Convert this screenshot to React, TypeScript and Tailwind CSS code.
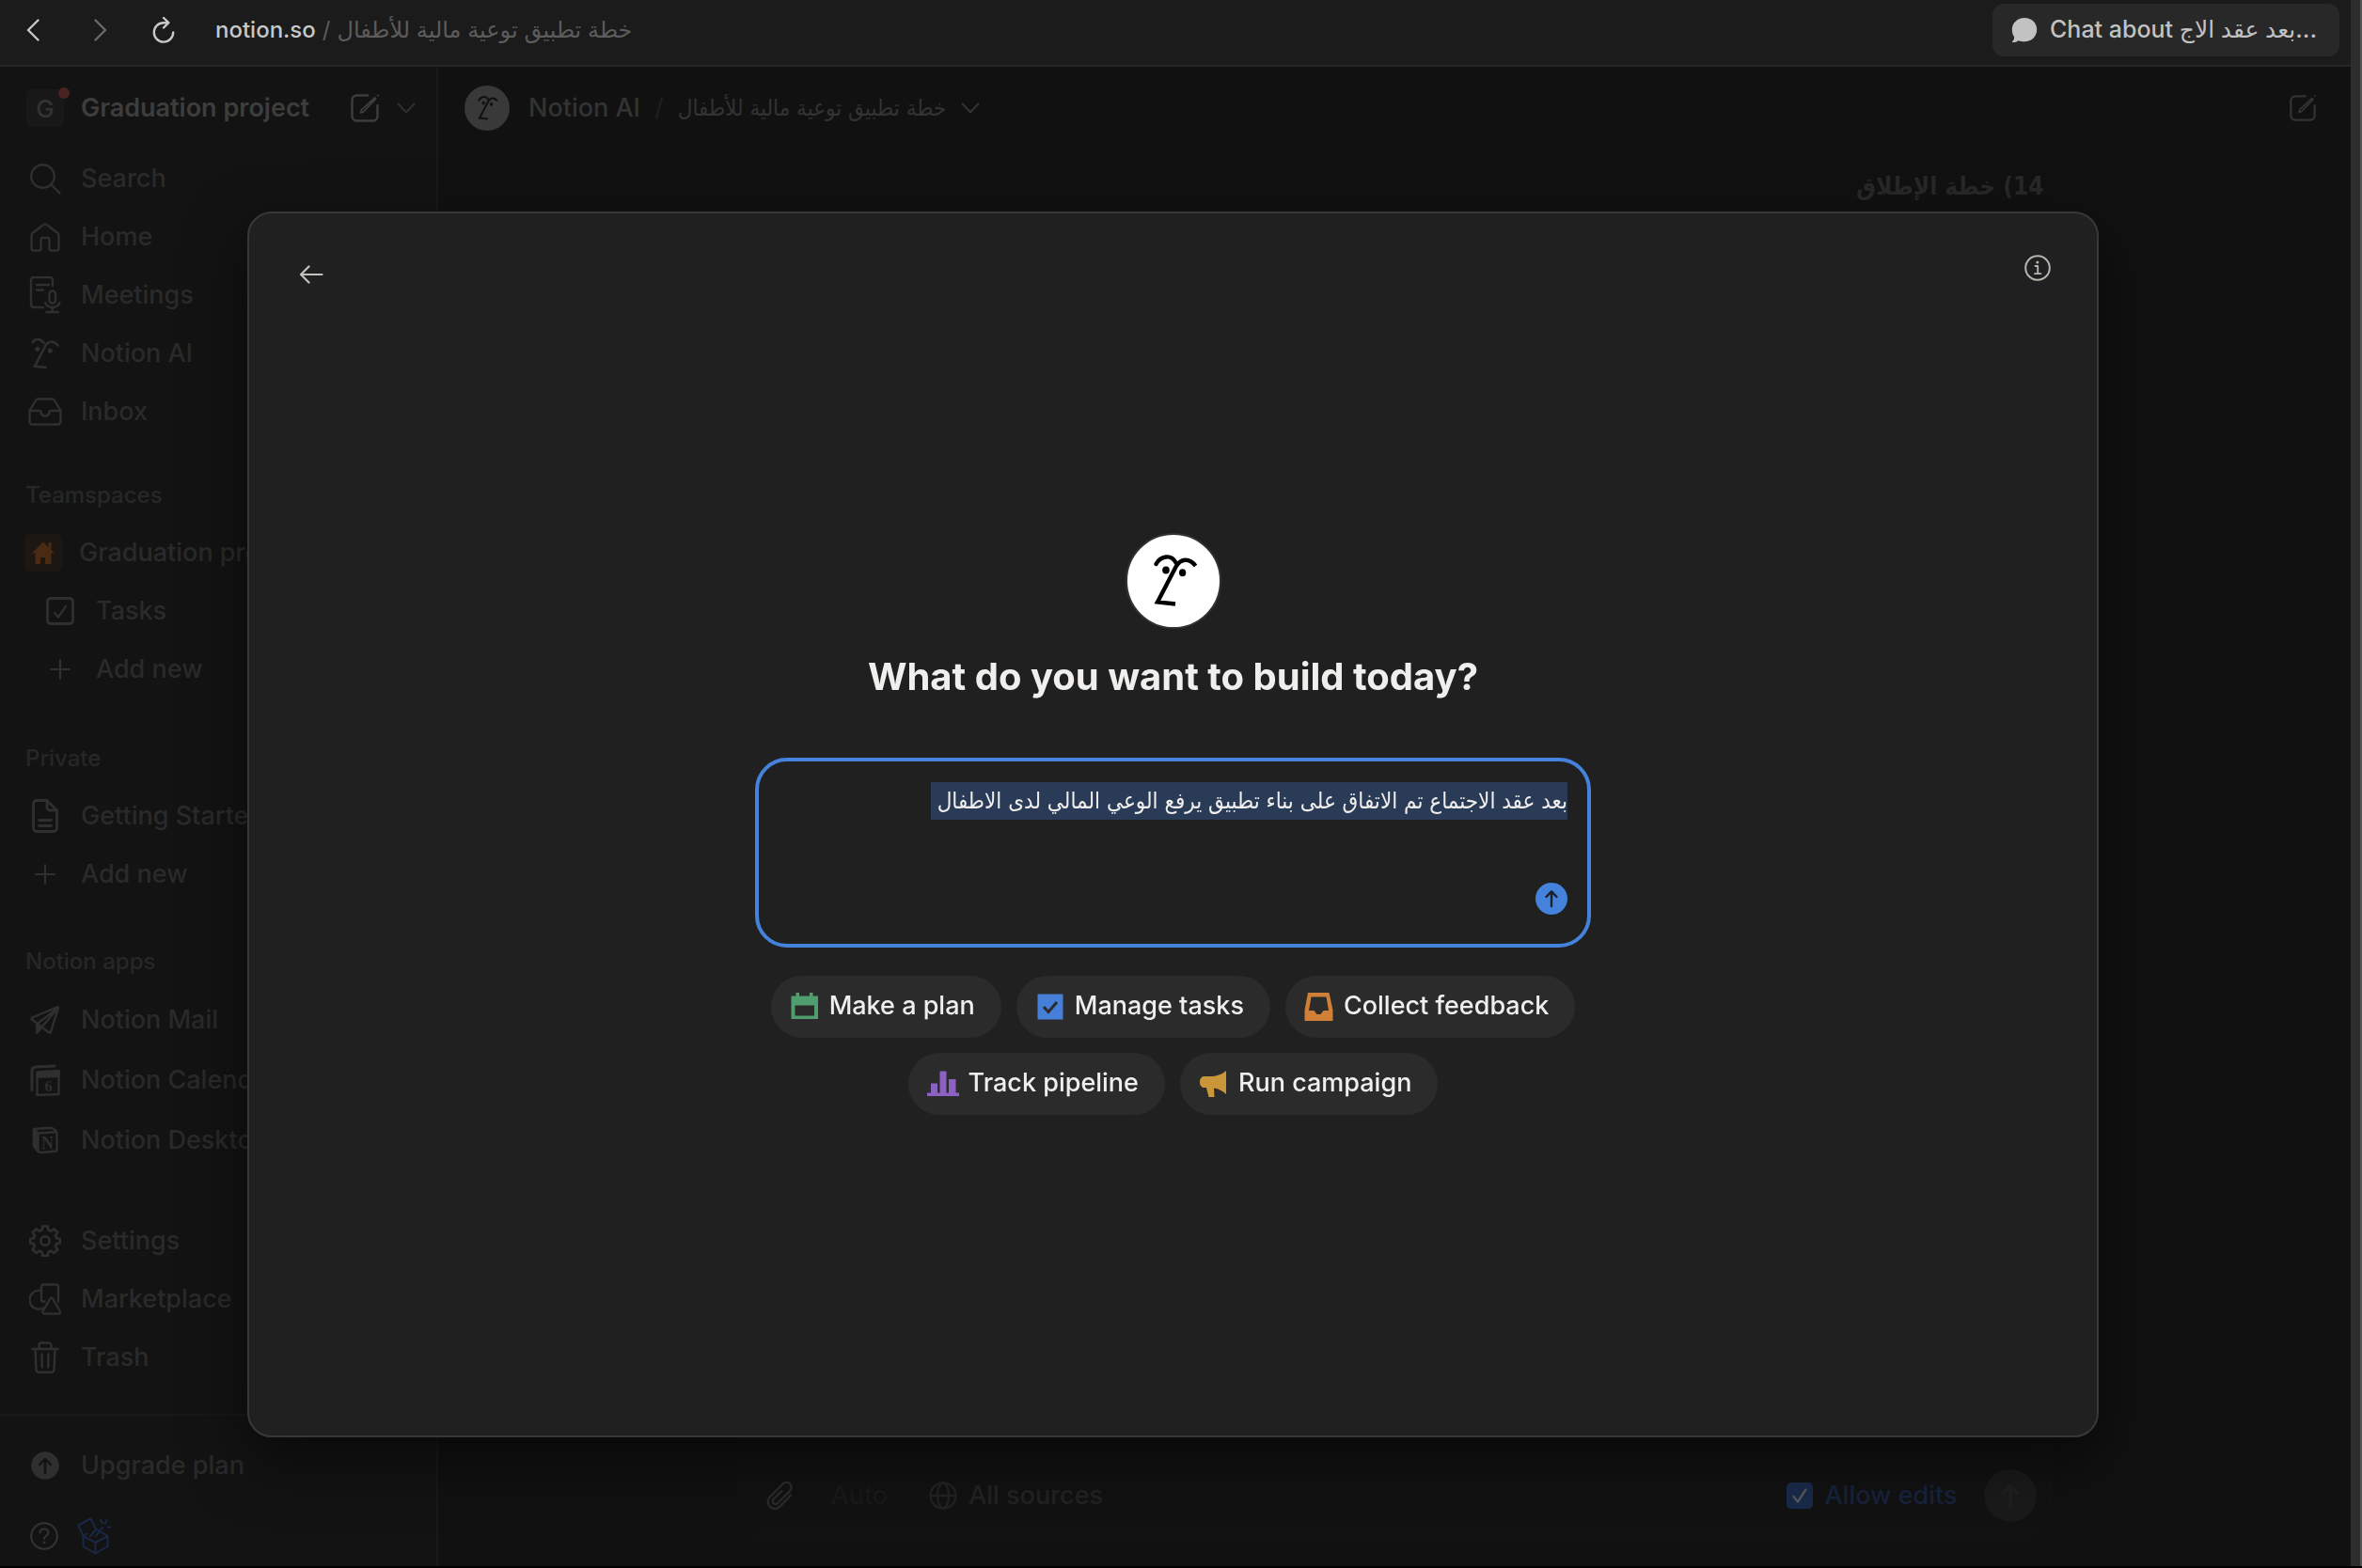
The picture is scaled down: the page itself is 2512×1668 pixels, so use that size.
import React, { useEffect, useRef } from 'react';

type IconProps = { className?: string };

const stroke = {
  fill: 'none',
  stroke: 'currentColor',
  strokeWidth: 2.4,
  strokeLinecap: 'round' as const,
  strokeLinejoin: 'round' as const,
};

const FaceIcon = ({ className = 'size-[98px]' }: IconProps) => (
  <svg viewBox="0 0 98 98" className={className} fill="none" stroke="currentColor" strokeWidth={4.4} aria-hidden="true">
    <path d="M30.5 31C35 22.500 46.500 20 51.500 29.500" strokeLinecap="round" />
    <path d="M51 73.5 32 71.5 51.500 34C57 24.500 66 24.500 72.500 33" />
    <ellipse cx="41" cy="37.5" rx="3.8" ry="4" fill="currentColor" stroke="none" />
    <ellipse cx="58.6" cy="40.3" rx="3.6" ry="4" fill="currentColor" stroke="none" />
  </svg>
);

const SmallFaceIcon = () => (
  <svg viewBox="26 20 50 58" className="h-[34px] w-[30px]" fill="none" stroke="currentColor" strokeWidth={4.6} aria-hidden="true">
    <path d="M28.5 28.5C33 21.5 43 21.5 48.5 30" strokeLinecap="round" />
    <path d="M52 74.5 32 72.5 51.5 35C56 26 67.5 25 74 34.5" strokeLinecap="round" strokeLinejoin="round" />
    <circle cx="37" cy="41" r="4.4" fill="currentColor" stroke="none" />
    <circle cx="60" cy="44" r="4.4" fill="currentColor" stroke="none" />
  </svg>
);

const SearchIcon = () => (
  <svg viewBox="0 0 34 34" className="size-[34px]" {...stroke} aria-hidden="true">
    <circle cx="14.5" cy="14.5" r="12.3" />
    <path d="m23.5 23.5 9 9" />
  </svg>
);

const HomeIcon = () => (
  <svg viewBox="0 0 32 32" className="size-8" {...stroke} aria-hidden="true">
    <path d="M1.5 14.2a3 3 0 0 1 1.300-2.500L14.300 3a3 3 0 0 1 3.400 0l11.500 8.700a3 3 0 0 1 1.300 2.500V28a2.500 2.500 0 0 1-2.500 2.500h-5A2 2 0 0 1 20.500 28.500V19a2 2 0 0 0-2-2h-5a2 2 0 0 0-2 2v9.500a2 2 0 0 1-2 2H4A2.500 2.500 0 0 1 1.500 28z" />
  </svg>
);

const MeetingsIcon = () => (
  <svg viewBox="0 0 34 40" className="h-10 w-[34px]" {...stroke} aria-hidden="true">
    <path d="M25 10V4a3 3 0 0 0-3-3H5a3 3 0 0 0-3 3v26a3 3 0 0 0 3 3h10" />
    <path d="M8 9h13M8 14.5h7" />
    <rect x="21.5" y="15.5" width="6.5" height="13" rx="3.25" />
    <path d="M17 28c1.5 3.5 4.500 5 7.700 5s6.300-1.500 7.800-5M24.700 33v5M18.500 38h12.500" />
  </svg>
);

const InboxIcon = () => (
  <svg viewBox="0 0 36 30" className="h-[30px] w-9" {...stroke} aria-hidden="true">
    <path d="M1.5 14 8 3a3 3 0 0 1 2.500-1.500h15A3 3 0 0 1 28 3l6.500 11v11.500a3 3 0 0 1-3 3h-27a3 3 0 0 1-3-3z" />
    <path d="M1.5 14H12c1.500 0 1.500 1 1.800 2.500.8 4 7.600 4 8.400 0C22.500 15 22.500 14 24 14h10.500" />
  </svg>
);

const TasksIcon = () => (
  <svg viewBox="0 0 30 30" className="size-[30px]" {...stroke} strokeWidth={2.8} aria-hidden="true">
    <rect x="1.5" y="1.5" width="27" height="27" rx="3.5" />
    <path d="m9 17 4 4.5L21 10" strokeWidth={2.4} />
  </svg>
);

const PlusIcon = () => (
  <svg viewBox="0 0 24 24" className="size-6" {...stroke} strokeWidth={2.2} aria-hidden="true">
    <path d="M12 2v20M2 12h20" />
  </svg>
);

const PageIcon = () => (
  <svg viewBox="0 0 28 36" className="h-9 w-7" {...stroke} strokeWidth={2.8} aria-hidden="true">
    <path d="M16 1.5H5A3.500 3.500 0 0 0 1.500 5v26A3.500 3.500 0 0 0 5 34.500h18a3.500 3.500 0 0 0 3.500-3.500V12z" />
    <path d="M16 1.5V9a3 3 0 0 0 3 3h7.500M7.500 22.500h13M7.500 28.500h13" />
  </svg>
);

const MailIcon = () => (
  <svg viewBox="0 0 32 32" className="size-8" {...stroke} aria-hidden="true">
    <path d="M30 3.5a1 1 0 0 0-1.300-1.200L2.200 13.500c-.8.400-.9 1.400-.2 1.900L7.500 20 20.300 29.500c.6.400 1.300.2 1.600-.5z" />
    <path d="M30 3 7.500 20v9.500l4.500-5.500z" />
    <path d="M7.500 20v9.500l5-6z" fill="currentColor" />
  </svg>
);

const CalendarIcon = () => (
  <svg viewBox="0 0 32 34" className="h-[34px] w-8" {...stroke} aria-hidden="true">
    <path d="M26 2 6 3C3.500 3.200 2 4.500 2 7v20.500" strokeWidth={3} />
    <path d="M7.500 9.500 30.500 8v24l-23 1z" />
    <path d="M7.500 8.500 30.500 7v6l-23 .5z" fill="currentColor" />
    <text x="19.5" y="29" textAnchor="middle" fontSize="16" fontWeight="700" fontFamily="Liberation Serif, serif" fill="currentColor" stroke="none">6</text>
  </svg>
);

const DesktopIcon = () => (
  <svg viewBox="0 0 28 30" className="h-[30px] w-7" {...stroke} aria-hidden="true">
    <path d="m2 3 18-1.300c1 0 1.500.1 2.500.9l3 2.400c.7.600 1 1 1 2v18c0 1.200-.5 1.700-1.800 1.800L9 28c-1 0-1.500-.2-2.200-1L2.800 22c-.6-.8-.8-1.200-.8-2.200z" />
    <path d="M2 3.500 6.500 7.500V27L2 21z" fill="currentColor" />
    <path d="m6.500 7.500 19.500-1.200" />
    <text x="16.5" y="24" textAnchor="middle" fontSize="18" fontWeight="700" fontFamily="Liberation Serif, serif" fill="currentColor" stroke="none">N</text>
  </svg>
);

const SettingsIcon = () => (
  <svg viewBox="0 0 34 34" className="size-[34px]" {...stroke} strokeWidth={2.6} aria-hidden="true">
    <path d="M14.300 1.500h5.400l.8 4 2.600 1.100 3.400-2.300 3.800 3.800-2.300 3.400 1.100 2.600 3.900.8v4.400l-3.900.8-1.100 2.600 2.300 3.400-3.800 3.800-3.400-2.300-2.600 1.100-.8 4h-5.400l-.8-4-2.600-1.100-3.400 2.300-3.800-3.800L6 22.700l-1.100-2.600-3.900-.8v-4.400l3.900-.8L6 11.500 3.700 8.100l3.800-3.800 3.400 2.300 2.600-1.100z" />
    <circle cx="17" cy="17" r="4.8" />
  </svg>
);

const MarketplaceIcon = () => (
  <svg viewBox="0 0 34 34" className="size-[34px]" {...stroke} aria-hidden="true">
    <path d="M13 8a10 10 0 1 0 3 18" />
    <path d="M16.500 19.500H15a2 2 0 0 1-2-2V3.500a2 2 0 0 1 2-2h14a2 2 0 0 1 2 2v16" />
    <path d="M22.300 16.500a1.600 1.600 0 0 1 2.800 0l7.800 13.300a1.800 1.800 0 0 1-1.600 2.700H16.200a1.800 1.800 0 0 1-1.600-2.700z" />
  </svg>
);

const TrashIcon = () => (
  <svg viewBox="0 0 30 34" className="h-[34px] w-[30px]" {...stroke} aria-hidden="true">
    <path d="M1.500 8h27M8.500 8V4a2.500 2.500 0 0 1 2.500-2.500h8A2.500 2.500 0 0 1 21.500 4v4" />
    <path d="m4.500 8 1 22a3 3 0 0 0 3 2.800h13a3 3 0 0 0 3-2.800l1-22M11.500 13.500l.3 14M18.500 13.500l-.3 14" />
  </svg>
);

const UpgradeIcon = () => (
  <svg viewBox="0 0 30 30" className="size-[30px]" aria-hidden="true">
    <circle cx="15" cy="15" r="14.8" fill="currentColor" />
    <path d="M15 23V8.500M9 14l6-6 6 6" fill="none" stroke="#131313" strokeWidth={2.4} strokeLinecap="round" strokeLinejoin="round" />
  </svg>
);

const HelpIcon = () => (
  <svg viewBox="0 0 30 30" className="size-[30px]" {...stroke} strokeWidth={2} aria-hidden="true">
    <circle cx="15" cy="15" r="13.8" />
    <path d="M10.500 11.500c0-2.500 2-4 4.500-4s4.500 1.500 4.500 4c0 3-4.500 3.200-4.500 6.500" />
    <circle cx="15" cy="22" r="1.4" fill="currentColor" stroke="none" />
  </svg>
);

const GiftIcon = () => (
  <svg viewBox="0 0 36 40" className="h-10 w-9" {...stroke} strokeWidth={2} aria-hidden="true">
    <path d="M6.500 20 19.500 27v11.500L6.500 31zM32.500 20l-13 7v11.500l13-7.500z" />
    <path d="m6.500 20 4-2.500M32.500 20l-11-6.500M6.500 20 1.500 8.500l13-7L20 13l-6 7" />
    <path d="m20 20 7-9M25 3l2 3.500M31.500 3l-1.500 3.500M35 10.500h-2.500" />
  </svg>
);

const ComposeIcon = ({ className = 'size-8' }: IconProps) => (
  <svg viewBox="0 0 32 32" className={className} {...stroke} aria-hidden="true">
    <path d="M19 2.500H7.500a5 5 0 0 0-5 5v17a5 5 0 0 0 5 5h17a5 5 0 0 0 5-5V13" />
    <path d="m11.500 21 1-3.200L26.500 5l1.200 1.200L14.500 19.800zM29.800 2.200l.3.300" strokeWidth={1.8} />
  </svg>
);

const ChevronDown = () => (
  <svg viewBox="0 0 20 12" className="h-3 w-5" {...stroke} strokeWidth={2} aria-hidden="true">
    <path d="m1.500 1.500 8.500 9 8.500-9" />
  </svg>
);

const PaperclipIcon = () => (
  <svg viewBox="0 0 28 32" className="h-8 w-7" {...stroke} aria-hidden="true">
    <path d="M26 15.500 14.500 27.500a7.300 7.300 0 0 1-10.800-10L17.500 3.600a5.200 5.200 0 0 1 7.700 7.200L12 24a3 3 0 0 1-4.500-4.200l9-9" />
  </svg>
);

const GlobeIcon = () => (
  <svg viewBox="0 0 30 30" className="size-[30px]" {...stroke} aria-hidden="true">
    <circle cx="15" cy="15" r="13.5" />
    <ellipse cx="15" cy="15" rx="6" ry="13.5" />
    <path d="M1.500 15h27" />
  </svg>
);

const ArrowUp = ({ className = 'size-5' }: IconProps) => (
  <svg viewBox="0 0 20 20" className={className} {...stroke} aria-hidden="true">
    <path d="M10 18V2.500M4.500 8 10 2.300 15.500 8" />
  </svg>
);

const mainLinks = [
  { label: 'Search', icon: <SearchIcon /> },
  { label: 'Home', icon: <HomeIcon /> },
  { label: 'Meetings', icon: <MeetingsIcon /> },
  { label: 'Notion AI', icon: <SmallFaceIcon /> },
  { label: 'Inbox', icon: <InboxIcon /> },
];

const appLinks = [
  { label: 'Notion Mail', icon: <MailIcon /> },
  { label: 'Notion Calendar', icon: <CalendarIcon /> },
  { label: 'Notion Desktop', icon: <DesktopIcon /> },
];

const utilityLinks = [
  { label: 'Settings', icon: <SettingsIcon /> },
  { label: 'Marketplace', icon: <MarketplaceIcon /> },
  { label: 'Trash', icon: <TrashIcon /> },
];

const suggestions = [
  {
    label: 'Make a plan',
    icon: (
      <svg viewBox="0 0 32 32" className="size-8 text-[#4f9e6d]" aria-hidden="true">
        <path fill="currentColor" fillRule="evenodd" d="M6.500 1H10v3.500h11V1h3.500v3.500H30V29H1.500V4.500h5zM5.500 14.500V25.500H26V14.500z" />
      </svg>
    ),
  },
  {
    label: 'Manage tasks',
    icon: (
      <svg viewBox="0 0 32 32" className="size-8 text-[#467fd7]" aria-hidden="true">
        <path fill="currentColor" d="M2.500 2.500h27v27h-27z" />
        <path d="m9 16 5 5.500 9-10.500" fill="none" stroke="#2b2b2b" strokeWidth={3} />
      </svg>
    ),
  },
  {
    label: 'Collect feedback',
    icon: (
      <svg viewBox="0 0 32 32" className="size-8 text-[#d07f36]" aria-hidden="true">
        <path fill="currentColor" fillRule="evenodd" d="M4 1h22.500l4 18.500V31H.5V19.500zM7.500 5.500 5 20h5.500l3 4h4l3-4H26L23.500 5.500z" />
      </svg>
    ),
  },
  {
    label: 'Track pipeline',
    icon: (
      <svg viewBox="0 0 34 32" className="h-8 w-[34px] text-[#8d60c3]" aria-hidden="true">
        <path fill="currentColor" d="M4 15.500h7V25.500h2.500V2.500h7v23H23V11h7.500v14.500H34V29H0v-3.500h4z" />
      </svg>
    ),
  },
  {
    label: 'Run campaign',
    icon: (
      <svg viewBox="0 0 32 32" className="size-8 text-[#c9973a]" aria-hidden="true">
        <path fill="currentColor" d="M29 2v25c-4-3.500-8-6-13-6.500l.5 9.500H10.500L8 20H5.500C3 20 1 17.500 1 14s2-6 4.500-6H13C19 8 25 5.500 29 2z" />
      </svg>
    ),
  },
];

type NavRowProps = { label: string; icon: React.ReactNode; height?: string; indent?: string };

const NavRow = ({ label, icon, height = 'h-[62px]', indent = 'pl-7' }: NavRowProps) => (
  <a href="#" className={`flex items-center gap-[18px] whitespace-nowrap ${height} ${indent}`}>
    <span className="flex w-10 shrink-0 justify-center text-[#2f2f2f]">{icon}</span>
    <span>{label}</span>
  </a>
);

const SectionLabel = ({ children }: { children: React.ReactNode }) => (
  <h2 className="flex h-[60px] items-center pl-[27px] text-[24px] font-medium text-[#272727]">{children}</h2>
);

const Sidebar = () => (
  <aside className="flex w-[466px] shrink-0 flex-col border-r-2 border-[#191919] bg-[#131313] text-[27px] font-medium text-[#2a2a2a]">
    <div className="flex h-[88px] shrink-0 items-center pl-7 text-[#3d3d3d]">
      <span className="relative flex size-10 items-center justify-center rounded-md bg-[#181818] text-[26px] text-[#333333]">
        G
        <span className="absolute -right-1.5 -top-0.5 size-3 rounded-full bg-[#49231f]"></span>
      </span>
      <span className="ml-[18px] whitespace-nowrap font-semibold">Graduation project</span>
      <div className="ml-auto flex items-center gap-[18px] pr-[22px]">
        <button type="button" aria-label="New page"><ComposeIcon /></button>
        <button type="button" aria-label="Switch workspace" className="text-[#303030]"><ChevronDown /></button>
      </div>
    </div>

    <nav>
      {mainLinks.map(link => <NavRow key={link.label} {...link} />)}
    </nav>

    <section className="mt-7">
      <SectionLabel>Teamspaces</SectionLabel>
      <NavRow
        label="Graduation project"
        indent="pl-[26px]"
        icon={
          <span className="flex size-10 items-center justify-center rounded-md bg-[#1d1714] text-[#4a2a12]">
            <svg viewBox="0 0 24 24" className="size-6" aria-hidden="true">
              <path fill="currentColor" d="M12 0.500 0 12.500h3.500V24H9v-7h5v7h6.500V12.500H24L20.500 9V1h-3v5z" />
            </svg>
          </span>
        }
      />
      <NavRow label="Tasks" icon={<TasksIcon />} indent="pl-11" />
      <NavRow label="Add new" icon={<PlusIcon />} indent="pl-11" />
    </section>

    <section className="mt-[34px]">
      <SectionLabel>Private</SectionLabel>
      <NavRow label="Getting Started" icon={<PageIcon />} />
      <NavRow label="Add new" icon={<PlusIcon />} />
    </section>

    <section className="mt-8">
      <SectionLabel>Notion apps</SectionLabel>
      {appLinks.map(link => <NavRow key={link.label} {...link} height="h-16" />)}
    </section>

    <nav className="mt-11">
      {utilityLinks.map(link => <NavRow key={link.label} {...link} />)}
    </nav>

    <div className="mt-auto border-t-2 border-[#181818] pt-[22px]">
      <NavRow label="Upgrade plan" icon={<UpgradeIcon />} />
      <div className="flex h-[76px] items-center gap-5 pl-8 pt-3">
        <button type="button" aria-label="Help" className="text-[#333333]"><HelpIcon /></button>
        <button type="button" aria-label="What's new" className="text-[#192846]"><GiftIcon /></button>
      </div>
    </div>
  </aside>
);

const BuildDialog = () => {
  const promptRef = useRef<HTMLTextAreaElement>(null);

  useEffect(() => {
    promptRef.current?.focus();
    promptRef.current?.select();
  }, []);

  return (
    <div className="fixed inset-0 flex pb-[139px] pl-[263px] pr-[280px] pt-[225px]">
      <div role="dialog" aria-labelledby="build-title" className="flex flex-1 flex-col rounded-[26px] border-2 border-[#383838] bg-[#202020] shadow-[0_24px_64px_rgba(0,0,0,0.5)]">
        <div className="flex h-[88px] shrink-0 items-start justify-between pl-[42px] pr-[46px] pt-[41px]">
          <button type="button" aria-label="Back" className="flex size-12 items-center justify-center text-[#c4c2be]">
            <svg viewBox="0 0 26 20" className="h-5 w-[26px]" {...stroke} strokeWidth={2.2} aria-hidden="true">
              <path d="M24.500 10H2M10.500 1.500 2 10l8.500 8.500" />
            </svg>
          </button>
          <button type="button" aria-label="About" className="flex size-[34px] items-center justify-center text-[#b8b5b0]">
            <svg viewBox="0 0 28 28" className="size-7" {...stroke} strokeWidth={2} aria-hidden="true">
              <circle cx="14" cy="14" r="12.8" />
              <path d="M11.500 12h2.700v8M11 20.200h6.400" strokeWidth={1.8} />
              <circle cx="13.8" cy="8" r="1.5" fill="currentColor" stroke="none" />
            </svg>
          </button>
        </div>

        <div className="flex flex-1 flex-col items-center justify-center pb-[90px]">
          <div className="flex size-[102px] items-center justify-center rounded-full border-2 border-[#333333] bg-white text-black">
            <FaceIcon />
          </div>
          <h1 id="build-title" className="mt-[25px] text-[40px] font-bold leading-[52px] text-[#f0efed]">
            What do you want to build today?
          </h1>

          <form className="mt-[60px] flex h-[202px] w-full max-w-[889px] flex-col rounded-[34px] border-4 border-[#4482db] px-[21px] pb-[31px] pt-[22px]">
            <textarea
              ref={promptRef}
              dir="rtl"
              aria-label="Describe what to build"
              defaultValue="بعد عقد الاجتماع تم الاتفاق على بناء تطبيق يرفع الوعي المالي لدى الاطفال "
              className="w-full flex-1 resize-none bg-transparent font-['DejaVu_Sans_Condensed','DejaVu_Sans',sans-serif] text-[24px] leading-10 text-[#f0efed] outline-none selection:bg-[#2a3b57] selection:text-[#f0efed]"
            />
            <button type="button" aria-label="Send" className="flex size-[34px] shrink-0 items-center justify-center self-end rounded-full bg-[#4482db] text-[#1d2026]">
              <ArrowUp />
            </button>
          </form>

          <div className="mt-[30px] flex w-full max-w-[889px] flex-wrap justify-center gap-4">
            {suggestions.map(item => (
              <button
                key={item.label}
                type="button"
                className="flex h-[66px] items-center gap-[10px] rounded-full bg-[#2b2b2b] pl-5 pr-7 text-[27px] font-medium text-[#f0efed]"
              >
                {item.icon}
                {item.label}
              </button>
            ))}
          </div>
        </div>
      </div>
    </div>
  );
};

const App = () => {
  return (
    <div className="flex h-screen border-b-2 border-black bg-[#111111] font-['Inter','DejaVu_Sans',sans-serif]">
      <div className="flex min-w-0 flex-1 flex-col">
        <header className="flex h-[71px] shrink-0 items-center border-b-2 border-[#262626] bg-[#1b1b1b] pb-[6px] pl-7 pr-3 text-[24px]">
          <button type="button" aria-label="Back" className="text-[#c8c8c8]">
            <svg viewBox="0 0 14 24" className="h-6 w-[14px]" {...stroke} aria-hidden="true">
              <path d="M12.500 1.500 2 12l10.500 10.500" />
            </svg>
          </button>
          <button type="button" aria-label="Forward" className="ml-[58px] text-[#6a6a6a]">
            <svg viewBox="0 0 14 24" className="h-6 w-[14px]" {...stroke} aria-hidden="true">
              <path d="M1.500 1.500 12 12 1.500 22.500" />
            </svg>
          </button>
          <button type="button" aria-label="Reload" className="ml-12 text-[#c8c8c8]">
            <svg viewBox="0 0 24 28" className="h-7 w-6" {...stroke} aria-hidden="true">
              <path d="M17 6.200H12a10.200 10.200 0 1 0 10.200 10.300M12 1l5.300 5.200L12 11.500" />
            </svg>
          </button>
          <div className="ml-[43px] flex items-center gap-[7px] whitespace-nowrap text-[#5c5c5c]">
            <span className="font-medium text-[#c8c8c8]">notion.so</span>
            <span>/</span>
            <span dir="rtl">خطة تطبيق توعية مالية للأطفال</span>
          </div>
          <button type="button" className="ml-auto flex h-14 items-center gap-[13px] rounded-xl bg-[#282828] pl-5 pr-6 text-[25px] font-medium text-[#c2c2c2]">
            <svg viewBox="0 0 28 28" className="size-7" aria-hidden="true">
              <path fill="currentColor" d="M14 1C6.500 1 .8 6.500.8 13.500c0 3 .9 5.500 2.200 7.500.4 2-.3 3.700-1.800 5-.5.500-.2 1 .5 1 2.300 0 4.300-.5 6-1.800 2 .8 4 1.100 6.300 1.100 7.500 0 13.200-5.500 13.200-12.800S21.500 1 14 1z" />
            </svg>
            <span className="whitespace-nowrap">Chat about بعد عقد الاج...</span>
          </button>
        </header>

        <div className="flex min-h-0 flex-1">
          <Sidebar />

          <main className="flex min-w-0 flex-1 flex-col">
            <div className="flex h-[88px] shrink-0 items-center pl-7 pr-9 text-[#333333]">
              <span className="flex size-12 items-center justify-center rounded-full bg-[#393939] text-[#111111]">
                <FaceIcon className="size-[46px]" />
              </span>
              <span className="ml-5 text-[27px] font-medium">Notion AI</span>
              <span className="mx-[15px] text-[27px] text-[#1f1f1f]">/</span>
              <span dir="rtl" className="font-['DejaVu_Sans_Condensed','DejaVu_Sans',sans-serif] text-[24px]">خطة تطبيق توعية مالية للأطفال</span>
              <button type="button" aria-label="Chat options" className="ml-4"><ChevronDown /></button>
              <button type="button" aria-label="New chat" className="ml-auto"><ComposeIcon className="size-[30px]" /></button>
            </div>

            <div className="mx-auto flex w-full max-w-[1397px] flex-1 flex-col justify-between pb-7">
              <h2 dir="rtl" className="pr-2 pt-5 font-['DejaVu_Sans_Condensed','DejaVu_Sans',sans-serif] text-[26px] font-bold text-[#282828]">14) خطة الإطلاق</h2>

              <div className="flex h-[180px] items-end rounded-[34px] border-2 border-[#131313] bg-[#121212] pb-[17px] pl-7 pr-[14px] text-[27px] font-medium text-[#232323]">
                <div className="flex h-14 w-full items-center">
                  <button type="button" aria-label="Attach file" className="text-[#2b2b2b]"><PaperclipIcon /></button>
                  <button type="button" className="ml-[41px] text-[#191919]">Auto</button>
                  <button type="button" className="ml-[44px] flex items-center gap-3">
                    <GlobeIcon />
                    All sources
                  </button>
                  <label className="ml-auto flex items-center gap-3 text-[#17233b]">
                    <span className="relative flex size-7">
                      <input type="checkbox" defaultChecked className="size-7 appearance-none rounded-[5px] bg-[#192b4b]" />
                      <svg viewBox="0 0 28 28" className="pointer-events-none absolute inset-0 size-7 text-[#55585c]" {...stroke} aria-hidden="true">
                        <path d="m7.500 15 4.500 5.500 8.500-13" />
                      </svg>
                    </span>
                    Allow edits
                  </label>
                  <button type="button" aria-label="Send message" className="ml-7 flex size-14 items-center justify-center rounded-full bg-[#1a1a1a] text-[#202020]">
                    <ArrowUp className="size-7" />
                  </button>
                </div>
              </div>
            </div>
          </main>
        </div>
      </div>

      {/* window edge */}
      <div className="w-3 shrink-0 border-r-2 border-[#565656] bg-[#2d2d2d]"></div>

      <BuildDialog />
    </div>
  );
};

export default App;
